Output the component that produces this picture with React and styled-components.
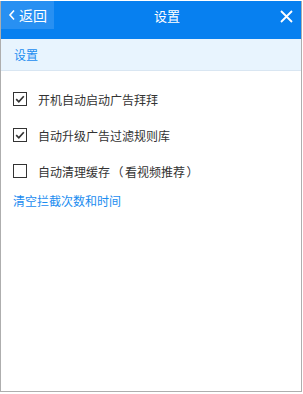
import React from "react";
import styled, { createGlobalStyle } from "styled-components";

const GlobalStyle = createGlobalStyle`
  html, body {
    margin: 0;
    padding: 0;
    background: #fff;
  }
  body {
    font-family: "Microsoft YaHei", "Noto Sans CJK SC", "Noto Sans", sans-serif;
  }
`;

const items = [
    { label: "开机自动启动广告拜拜", checked: true },
    { label: "自动升级广告过滤规则库", checked: true },
    { label: "自动清理缓存", note: "看视频推荐", checked: false },
];

const App = () => {
    return (
        <>
            <GlobalStyle />
            <Window>
                <Header>
                    <BackButton>
                        <svg width="8" height="12" viewBox="0 0 8 12">
                            <path d="M6 1.5 L2 6 L6 10.5" fill="none" stroke="#fff" strokeWidth="1.6" />
                        </svg>
                        返回
                    </BackButton>
                    <Title>设置</Title>
                    <CloseButton>
                        <svg width="13" height="13" viewBox="0 0 13 13">
                            <path d="M1 1 L12 12 M12 1 L1 12" stroke="#fff" strokeWidth="1.8" />
                        </svg>
                    </CloseButton>
                </Header>
                <SubHeader>设置</SubHeader>
                <Content>
                    {items.map((item) => (
                        <Row key={item.label}>
                            <Box>
                                {item.checked && (
                                    <svg width="12" height="12" viewBox="0 0 12 12">
                                        <path d="M2.2 6.2 L4.8 8.8 L9.8 3.2" fill="none" stroke="#333" strokeWidth="1.7" />
                                    </svg>
                                )}
                            </Box>
                            <Label>
                                {item.label}
                                {item.note && (
                                    <>
                                        <Paren>（</Paren>
                                        {item.note}
                                        <Paren>）</Paren>
                                    </>
                                )}
                            </Label>
                        </Row>
                    ))}
                    <LinkText>清空拦截次数和时间</LinkText>
                </Content>
            </Window>
        </>
    );
};

export default App;

const Window = styled.div`
    margin-top: 1px;
    width: 302px;
    height: 391px;
    box-sizing: border-box;
    border: 1px solid #aeaeae;
    border-top: none;
    background: #fff;
    display: flex;
    flex-direction: column;
`;

const Header = styled.div`
    height: 38px;
    background: #0780f0;
    display: flex;
    align-items: flex-start;
`;

const BackButton = styled.div`
    width: 53px;
    height: 28px;
    background: #2890f2;
    color: #fff;
    font-size: 14px;
    display: flex;
    align-items: center;
    padding-left: 7px;
    gap: 3px;
    box-sizing: border-box;
`;

const Title = styled.div`
    flex: 1;
    color: #fff;
    font-size: 13px;
    line-height: 30px;
    text-align: center;
`;

const CloseButton = styled.div`
    width: 21px;
    height: 31px;
    display: flex;
    align-items: center;
    justify-content: flex-start;
`;

const SubHeader = styled.div`
    height: 31px;
    background: #e8f4fe;
    border-bottom: 1px solid #d9e6f2;
    color: #1a8cf0;
    font-size: 12px;
    line-height: 31px;
    padding-left: 13px;
`;

const Content = styled.div`
    padding: 10px 0 0 12px;
    display: flex;
    flex-direction: column;
`;

const Row = styled.div`
    height: 36px;
    display: flex;
    align-items: center;
    gap: 11px;
`;

const Box = styled.div`
    width: 14px;
    height: 14px;
    box-sizing: border-box;
    border: 1px solid #333;
    background: #fff;
    display: flex;
    align-items: center;
    justify-content: center;
`;

const Label = styled.div`
    font-size: 12px;
    color: #333;
`;

const Paren = styled.span`
    display: inline-block;
    width: 15px;
    text-align: center;
`;

const LinkText = styled.div`
    margin-top: 3px;
    font-size: 12px;
    color: #1a8cf0;
    cursor: pointer;
`;
